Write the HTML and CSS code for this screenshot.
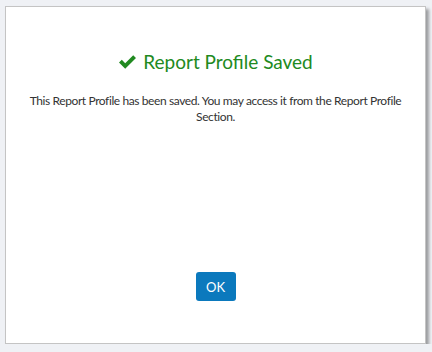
FILE: index.html
```html
<!DOCTYPE html>
<html lang="en">
<head>
    <meta charset="UTF-8">
    <title>Report Profile Saved</title>
    <link rel="stylesheet" href="styles.css">
</head>
<body>
    <div class="dialog">
        <h2 class="dialog-title">
            <svg class="check" width="19" height="16" viewBox="0 0 19 16">
                <path d="M1 8.5 L3.8 5.8 L7.2 9.2 L15.2 1.2 L18 4 L7.2 14.8 Z" fill="#218a21"/>
            </svg>
            Report Profile Saved
        </h2>
        <p class="dialog-text">This Report Profile has been saved. You may access it from the Report Profile Section.</p>
        <div class="dialog-actions">
            <button class="btn-ok">OK</button>
        </div>
    </div>
</body>
</html>
```

FILE: styles.css
```css
* {
    margin: 0;
    padding: 0;
    box-sizing: border-box;
}

body {
    background: #eff1f5;
    font-family: 'Lato', sans-serif;
    color: #333;
    padding: 6px 0 0 5px;
}

.dialog {
    width: 421px;
    height: 338px;
    background: white;
    border: 1px solid #c4c4c4;
    box-shadow: 3px 3px 3px rgba(0, 0, 0, 0.35);
    display: flex;
    flex-direction: column;
    align-items: center;
    padding: 43px 18px 42px;
}

.dialog-title {
    font-size: 19px;
    font-weight: 400;
    color: #218a21;
    display: flex;
    align-items: center;
    gap: 6px;
}

.dialog-text {
    margin-top: 20px;
    font-size: 12px;
    letter-spacing: -0.4px;
    line-height: 16px;
    text-align: center;
}

.dialog-actions {
    margin-top: auto;
}

.btn-ok {
    width: 40px;
    height: 29px;
    background: #0b79bd;
    color: white;
    border: none;
    border-radius: 3px;
    font-family: 'Lato', sans-serif;
    font-size: 13px;
}
```
